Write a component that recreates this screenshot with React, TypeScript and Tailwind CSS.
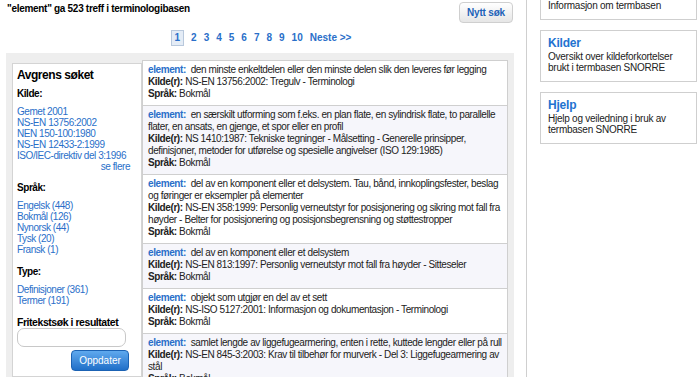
import React from 'react';

const font = { fontFamily: '"Liberation Sans", Arial, sans-serif' };

type Result = {
  def: string;
  source: string;
  alt: boolean;
};

const results: Result[] = [
  {
    def: 'den minste enkeltdelen eller den minste delen slik den leveres før legging',
    source: 'NS-EN 13756:2002: Tregulv - Terminologi',
    alt: false,
  },
  {
    def: 'en særskilt utforming som f.eks. en plan flate, en sylindrisk flate, to parallelle flater, en ansats, en gjenge, et spor eller en profil',
    source:
      'NS 1410:1987: Tekniske tegninger - Målsetting - Generelle prinsipper, definisjoner, metoder for utførelse og spesielle angivelser (ISO 129:1985)',
    alt: true,
  },
  {
    def: 'del av en komponent eller et delsystem. Tau, bånd, innkoplingsfester, beslag og føringer er eksempler på elementer',
    source:
      'NS-EN 358:1999: Personlig verneutstyr for posisjonering og sikring mot fall fra høyder - Belter for posisjonering og posisjonsbegrensning og støttestropper',
    alt: false,
  },
  {
    def: 'del av en komponent eller et delsystem',
    source: 'NS-EN 813:1997: Personlig verneutstyr mot fall fra høyder - Sitteseler',
    alt: true,
  },
  {
    def: 'objekt som utgjør en del av et sett',
    source: 'NS-ISO 5127:2001: Informasjon og dokumentasjon - Terminologi',
    alt: false,
  },
  {
    def: 'samlet lengde av liggefugearmering, enten i rette, kuttede lengder eller på rull',
    source: 'NS-EN 845-3:2003: Krav til tilbehør for murverk - Del 3: Liggefugearmering av stål',
    alt: true,
  },
];

const kilder = ['Gemet 2001', 'NS-EN 13756:2002', 'NEN 150-100:1980', 'NS-EN 12433-2:1999', 'ISO/IEC-direktiv del 3:1996'];
const sprak = ['Engelsk (448)', 'Bokmål (126)', 'Nynorsk (44)', 'Tysk (20)', 'Fransk (1)'];
const typer = ['Definisjoner (361)', 'Termer (191)'];

const FilterList = ({ items }: { items: string[] }) => (
  <ul className="mt-[6px] text-[10px] leading-[11px] text-[#2a6fc9] whitespace-nowrap">
    {items.map((i) => (
      <li key={i}>{i}</li>
    ))}
  </ul>
);

const Sidebar = () => (
  <div className="w-[130px] shrink-0 self-start bg-white border border-[#d4d4d4] px-[4px] pt-[4px] pb-[5px] mt-[2px] tracking-[-0.45px]">
    <h2 className="text-[12px] leading-[14px] font-bold text-black">Avgrens søket</h2>
    <h3 className="mt-[6px] text-[10px] leading-[12px] font-bold text-black">Kilde:</h3>
    <FilterList items={kilder} />
    <div className="text-right text-[10px] leading-[11px] text-[#2a6fc9] pr-[7px]">se flere</div>
    <h3 className="mt-[10px] text-[10px] leading-[12px] font-bold text-black">Språk:</h3>
    <FilterList items={sprak} />
    <h3 className="mt-[11px] text-[10px] leading-[12px] font-bold text-black">Type:</h3>
    <FilterList items={typer} />
    <h3 className="mt-[10px] text-[10.5px] leading-[12px] font-bold text-black whitespace-nowrap">Fritekstsøk i resultatet</h3>
    <input className="block mt-0 w-[109px] h-[19px] rounded-[7px] border border-[#c8c8c8] bg-white" />
    <div className="flex justify-end pr-[8px] mt-[3px]">
      <button className="w-[58px] h-[21px] rounded-[4px] bg-gradient-to-b from-[#5fa9ee] to-[#1f6fc8] text-white text-[10px] border border-[#1b62b3] tracking-normal">
        Oppdater
      </button>
    </div>
  </div>
);

const ResultRow = ({ r }: { r: Result }) => (
  <div
    className={`border border-[#cfcfcf] -mt-px px-[5px] pt-[3px] pb-[5px] text-[10px] leading-[12px] text-[#222] tracking-[-0.4px] ${
      r.alt ? 'bg-[#f6f6fb]' : 'bg-white'
    }`}
  >
    <p>
      <span className="font-bold text-[#2a6fc9]">element:</span>&nbsp; {r.def}
    </p>
    <p>
      <span className="font-bold">Kilde(r):</span> {r.source}
    </p>
    <p>
      <span className="font-bold">Språk:</span> Bokmål
    </p>
  </div>
);

const InfoBox = ({ title, text }: { title?: string; text: string }) => (
  <div className="border border-[#cfcfcf] bg-white px-[7px] pt-[4px] pb-[8px]">
    {title && <div className="text-[12px] font-bold leading-[16px] text-[#2272d0] tracking-[-0.2px]">{title}</div>}
    <div className="text-[10px] leading-[11px] text-[#222] tracking-[-0.25px]">{text}</div>
  </div>
);

const App: React.FC = () => {
  return (
    <div className="flex h-[377px] w-[700px] overflow-hidden bg-white" style={font}>
      {/* Main column */}
      <div className="w-[514px] shrink-0 flex flex-col">
        <div className="flex justify-between items-start h-[25px]">
          <h1 className="mt-[3px] ml-[7px] text-[10px] leading-[12px] font-bold text-black tracking-[-0.3px]">
            "element" ga 523 treff i terminologibasen
          </h1>
          <button className="mt-[2px] mr-[1px] w-[54px] h-[21px] rounded-[4px] border border-[#cfcfcf] bg-gradient-to-b from-white to-[#e6e6e6] text-[10px] font-bold text-[#1d62b8] tracking-[-0.2px]">
            Nytt søk
          </button>
        </div>

        {/* Pagination */}
        <div className="flex justify-center items-center gap-[7px] mt-[7px] pl-[8px] text-[10px] leading-[12px] font-bold text-[#2a6fc9]">
          <span className="px-[3px] py-px border border-[#b8c8dc] bg-[#e4ecf6]">1</span>
          {['2', '3', '4', '5', '6', '7', '8', '9', '10'].map((n) => (
            <span key={n}>{n}</span>
          ))}
          <span>Neste &gt;&gt;</span>
        </div>

        {/* Gray panel */}
        <div className="mt-[7px] ml-[6px] flex-1 bg-[#eeeeee] pl-[6px] pr-[6px] pt-[8px] flex">
          <Sidebar />
          <div className="flex-1 min-w-0">
            {results.map((r, i) => (
              <ResultRow key={i} r={r} />
            ))}
          </div>
        </div>
      </div>

      {/* Right column */}
      <div className="flex-1 border-l border-[#cfcfcf] ml-[12px] pl-[13px] pr-[3px] flex flex-col gap-[10px] -mt-[5px]">
        <InfoBox text="Informasjon om termbasen" />
        <InfoBox title="Kilder" text="Oversikt over kildeforkortelser brukt i termbasen SNORRE" />
        <InfoBox title="Hjelp" text="Hjelp og veiledning i bruk av termbasen SNORRE" />
      </div>
    </div>
  );
};

export default App;
